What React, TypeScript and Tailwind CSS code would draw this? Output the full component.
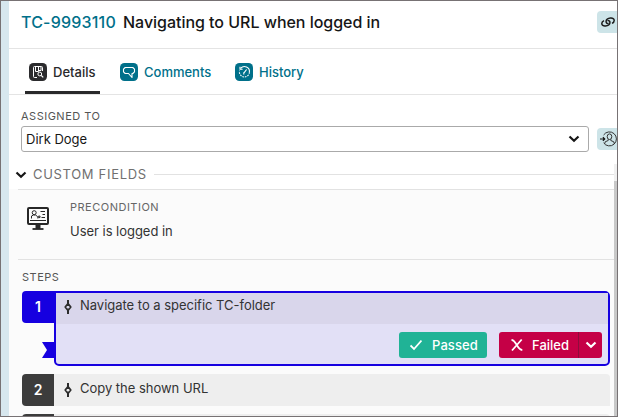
import type { ReactNode } from "react";

const ChevronDown = ({ className }: { className?: string }) => (
    <svg viewBox="0 0 12 8" className={className} fill="none" stroke="currentColor" strokeWidth="2.2">
        <path d="M1.5 1.5L6 5.8L10.5 1.5" />
    </svg>
);

const DetailsIcon = () => (
    <svg viewBox="0 0 18 18" className="size-[18px]" fill="none" stroke="#fff" strokeWidth="1">
        <rect width="18" height="18" rx="4.5" fill="#2b2b2d" stroke="none" />
        <path d="M8 14.5H5.5a1 1 0 0 1-1-1V4.5a1 1 0 0 1 1-1h7a1 1 0 0 1 1 1V8" />
        <path d="M6.5 4v4.500h3V4M9.500 7.500h2.500V4" />
        <circle cx="10.8" cy="11" r="1.9" />
        <path d="M12.2 12.4l2 2" strokeWidth="1.3" />
    </svg>
);

const CommentsIcon = () => (
    <svg viewBox="0 0 18 18" className="size-[18px]" fill="none" stroke="#fff" strokeWidth="1.1">
        <rect width="18" height="18" rx="4.5" fill="#00708a" stroke="none" />
        <path d="M5.2 4.5h7.6l1.7 1.700v2.600l-1.700 1.700h-.8v4l-3.500-4H5.200l-1.700-1.700V6.200z" strokeLinejoin="round" />
    </svg>
);

const HistoryIcon = () => (
    <svg viewBox="0 0 18 18" className="size-[18px]" fill="none" stroke="#fff" strokeWidth="1.1">
        <rect width="18" height="18" rx="4.5" fill="#00708a" stroke="none" />
        <path d="M5.6 5.4A5 5 0 0 1 14.4 9.3" />
        <path d="M14.4 9.3A5 5 0 1 1 4.6 7.6" strokeDasharray="1.6 1" />
        <path d="M5 3.8v2.4h2.6M11.6 6.5L9.2 9.6M8.8 9.2v2.2" />
    </svg>
);

const LinkIcon = () => (
    <svg viewBox="0 0 14 12" className="h-3 w-3.5 shrink-0" fill="none" stroke="#1c1c1c" strokeWidth="1.5">
        <path d="M7.600 7.600C5.700 7.700 4.900 6.500 5.100 5.200c.2-1.600 2-2.900 4.400-3.100 2.300-.2 3.700.8 3.700 2.300 0 1.200-.8 2.200-2.200 2.900" />
        <path d="M6.400 4.400c1.900-.1 2.700 1.100 2.500 2.400-.2 1.600-2 2.900-4.400 3.100-2.300.2-3.700-.8-3.700-2.300 0-1.200.8-2.200 2.200-2.900" />
    </svg>
);

const AssignIcon = () => (
    <svg viewBox="0 0 17 16" className="h-4 w-[17px] shrink-0" fill="none" stroke="#333" strokeWidth="1">
        <path d="M3.600 4A7 7 0 1 1 3.600 11.800" />
        <path d="M0 8h4.500M2.900 6.200L4.700 8L2.900 9.800" strokeWidth="1.200" stroke="#111" />
        <ellipse cx="9.500" cy="5.700" rx="2.300" ry="2.800" />
        <path d="M8.200 8.300v1.200l-3 1.300-.5 2M10.800 8.300v1.200l3 1.300.5 2" />
    </svg>
);

const MonitorIcon = () => (
    <svg viewBox="0 0 24 24" className="size-6" fill="none" stroke="#272727">
        <rect x="2" y="2" width="20" height="16" rx="1" strokeWidth="2" />
        <path d="M4 14.500h16" strokeWidth="1" />
        <path d="M10 18.500h4v4h-4z" fill="#272727" strokeWidth="1" />
        <path d="M6.500 23h11" strokeWidth="1.800" />
        <circle cx="8.200" cy="6.700" r="2" strokeWidth="1" />
        <path d="M5.500 12.500V10l2-1h2l2 1.500 2.500-.5v1.500l-3 .4" strokeWidth="1" />
        <path d="M14.500 5.500h4.500M16.500 8.500h2.500M15.500 11.500h3.500" strokeWidth="1" />
    </svg>
);

const StepIcon = () => (
    <svg viewBox="0 0 8 14" className="h-3.5 w-2" fill="none" stroke="#2c2c2c" strokeWidth="2">
        <path d="M4 0v4M4 10v4" />
        <path d="M4 3.600L6.800 7L4 10.400L1.200 7z" strokeWidth="1.700" strokeLinejoin="round" />
    </svg>
);

const Tab = ({ icon, label, className }: { icon: ReactNode; label: string; className: string }) => (
    <button className={`flex h-[45px] items-center gap-1.5 border-b-3 pt-1 pr-1 pl-1 text-[13px] font-medium ${className}`}>
        {icon}
        <span className="pt-px whitespace-nowrap">{label}</span>
    </button>
);

const StepHeader = ({ text, className }: { text: string; className: string }) => (
    <div className={`flex gap-2 ${className}`}>
        <div className="pt-0.5"><StepIcon /></div>
        <span className="text-[13px] leading-[15px] tracking-[-0.02px]">{text}</span>
    </div>
);

const App = () => {
    return (
        <main className="flex h-[417px] w-[618px] overflow-hidden border border-[#777274] bg-white font-['Inter','Liberation_Sans',sans-serif] text-[#333]">
            <div className="w-2 shrink-0 bg-[#d7e7ee]" />
            <div className="flex min-w-0 flex-1 flex-col">
                <header className="flex h-12 shrink-0 items-center border-b border-[#e4e4e4] pl-[12px]">
                    <h1 className="mb-[5px] flex flex-1 gap-[7px] text-base font-medium whitespace-nowrap text-[#161616]">
                        <span className="w-[95px] tracking-[0.2px] text-[#00708a]">TC-9993110</span>
                        <span className="tracking-[-0.03px]">Navigating to URL when logged in</span>
                    </h1>
                    <button className="mb-[5px] flex h-[22px] w-5 items-center overflow-hidden rounded-l bg-[#cde4e8] pl-1">
                        <LinkIcon />
                    </button>
                </header>
                <nav className="flex h-[46px] shrink-0 border-b border-[#e4e4e4] pl-4 text-[#00708a]">
                    <Tab icon={<DetailsIcon />} label="Details" className="w-[75px] border-[#29292b] text-[#29292b]" />
                    <Tab icon={<CommentsIcon />} label="Comments" className="ml-4 w-[100px] border-transparent" />
                    <Tab icon={<HistoryIcon />} label="History" className="ml-[15px] border-transparent" />
                </nav>
                <section className="h-[69px] shrink-0 pt-[14px] pl-3">
                    <p className="text-[11px] leading-[14px] tracking-[0.5px] text-[#555]">ASSIGNED TO</p>
                    <div className="mt-[3px] flex items-center justify-between">
                        <button className="flex h-[26px] w-[568px] items-center justify-between rounded-[3px] border border-[#aaa] pr-2 pl-1 text-[13px] text-[#161616]">
                            <span className="pt-0.5">Dirk Doge</span>
                            <ChevronDown className="h-2 w-3" />
                        </button>
                        <button className="flex h-[22px] w-5 items-center overflow-hidden rounded-l bg-[#cde4e8] pl-[3px]">
                            <AssignIcon />
                        </button>
                    </div>
                </section>
                <div className="flex min-h-0 flex-1">
                    <div className="flex min-w-0 flex-1 flex-col overflow-hidden">
                        <div className="flex h-[25px] shrink-0 items-center pb-[3px] pl-[6px]">
                            <ChevronDown className="h-2 w-3 text-[#161616]" />
                            <h2 className="ml-[6px] w-[121px] text-[13px] whitespace-nowrap tracking-[0.68px] text-[#707070]">CUSTOM FIELDS</h2>
                            <div className="-mt-px h-px flex-1 bg-[#e2e2e2]" />
                        </div>
                        <div className="flex-1 bg-[#fbfbfb]">
                            <div className="ml-[9px] flex h-[71px] border-y border-[#e2e2e2] pt-4 pl-2">
                                <MonitorIcon />
                                <div className="ml-5 -mt-[6px]">
                                    <p className="text-[11px] leading-[14px] tracking-[0.5px] text-[#666]">PRECONDITION</p>
                                    <p className="mt-[9px] text-[13px] leading-4 tracking-[-0.03px]">User is logged in</p>
                                </div>
                            </div>
                            <div className="pt-[10px] pr-1 pl-[13px]">
                                <p className="text-[11px] leading-[14px] tracking-[0.5px] text-[#555]">STEPS</p>
                                <div className="mt-[7px] flex h-[75px]">
                                    <div className="flex w-8 flex-col items-end">
                                        <div className="flex h-8 w-8 items-center justify-center rounded-l bg-[#1600e0] text-sm font-semibold text-white">1</div>
                                        <svg viewBox="0 0 12 16" className="mt-[19px] h-4 w-3" fill="#1600e0">
                                            <path d="M0 0h12v16H0l5-8z" />
                                        </svg>
                                    </div>
                                    <div className="flex-1 rounded-r-[5px] rounded-bl-[5px] border-2 border-[#1600e0] bg-[#e2e0f6]">
                                        <StepHeader text="Navigate to a specific TC-folder" className="h-[31px] bg-[#d9d6eb] pt-[5px] pl-2" />
                                        <div className="flex justify-end gap-3 pt-2 pr-[6px] text-[13px] font-medium text-white">
                                            <button className="flex h-[26px] w-[88px] items-center rounded-[3px] bg-[#20b396] pl-[11px]">
                                                <svg viewBox="0 0 12 12" className="size-3" fill="none" stroke="#fff" strokeWidth="1.8">
                                                    <path d="M.5 6.500L4 10L11.500 1.500" />
                                                </svg>
                                                <span className="ml-[10px] pt-0.5 tracking-[0.1px]">Passed</span>
                                            </button>
                                            <div className="flex h-[26px] overflow-hidden rounded-[3px] bg-[#c50046]">
                                                <button className="flex w-20 items-center border-r border-[#8e0c3c] pl-3">
                                                    <svg viewBox="0 0 12 14" className="h-3.5 w-3" fill="none" stroke="#fff" strokeWidth="1.8">
                                                        <path d="M.5 1.800C3 2 4 4 5.500 6.500S8.500 11.800 11.300 12M10.700 1.500L1 12.500" />
                                                    </svg>
                                                    <span className="ml-[9px] pt-0.5">Failed</span>
                                                </button>
                                                <button className="flex w-[23px] items-center justify-center">
                                                    <ChevronDown className="h-2 w-3" />
                                                </button>
                                            </div>
                                        </div>
                                    </div>
                                </div>
                                <div className="mt-2 flex h-8">
                                    <div className="flex w-8 items-center justify-center rounded-l bg-[#3c3c3c] text-sm font-semibold text-white">2</div>
                                    <StepHeader text="Copy the shown URL" className="flex-1 rounded-tr bg-[#eee] pt-[7px] pl-[10px]" />
                                </div>
                                <div className="mt-2 flex h-8">
                                    <div className="w-8 rounded-l bg-[#3c3c3c]" />
                                    <div className="flex-1 rounded-tr bg-[#eee]" />
                                </div>
                            </div>
                        </div>
                    </div>
                    <div className="w-[3px] bg-[#c8c8c8]">
                        <div className="h-[17px] bg-[#f0f0f0]" />
                    </div>
                </div>
            </div>
        </main>
    );
};

export default App;
